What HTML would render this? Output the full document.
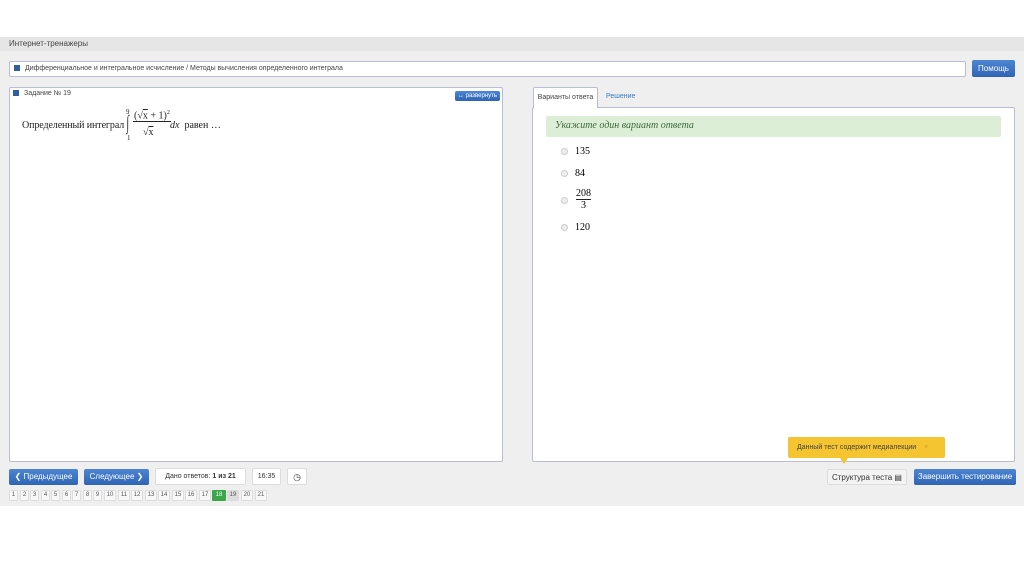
<!DOCTYPE html>
<html><head><meta charset="utf-8"><style>
*{box-sizing:border-box;margin:0;padding:0}
body{width:1024px;height:574px;background:#fff;font-family:"Liberation Sans",sans-serif;position:relative;overflow:hidden}
.a{position:absolute}
.band{left:0;top:37px;width:1024px;height:469px;background:#efefef}
.hdr{left:0;top:37px;width:1024px;height:14px;background:#e6e6e6;font-size:8px;color:#444;padding:2px 9px}
.box{background:#fff;border:1px solid #b9bdd0;border-radius:2px}
.sq{display:inline-block;width:6px;height:6px;background:#2f5f9e;vertical-align:middle;margin-right:5px}
.btn{color:#fff;background:linear-gradient(#4c86d3,#2f64b4);border-radius:2px;font-size:8px;text-align:center}
.wbtn{background:#fff;border:1px solid #ddd;border-radius:2px;font-size:7px;text-align:center;color:#333}
.serif{font-family:"Liberation Serif",serif}
.rad{width:7px;height:7px;border-radius:50%;border:1px solid #ccc;background:#eee}
.pg{top:490px;height:11px;border:1px solid #ddd;background:#f8f8f8;font-size:6px;color:#555;text-align:center;line-height:9px;border-radius:1px}
</style></head><body>
<div class="a band"></div>
<div class="a hdr">Интернет-тренажеры</div>
<div class="a box" style="left:9px;top:61px;width:957px;height:16px;font-size:7px;color:#444;padding:3px 4px"><span class="sq"></span>Дифференциальное и интегральное исчисление / Методы вычисления определенного интеграла</div>
<div class="a btn" style="left:972px;top:60px;width:43px;height:17px;line-height:17px">Помощь</div>
<div class="a box" style="left:9px;top:87px;width:494px;height:375px"></div>
<div class="a" style="left:13px;top:90px;font-size:7px;color:#444"><span class="sq"></span>Задание № 19</div>
<div class="a btn" style="left:455px;top:91px;width:45px;height:10px;font-size:6px;line-height:10px">↔ развернуть</div>
<div class="a serif" style="left:22px;top:120px;font-size:10px;color:#222;letter-spacing:-0.1px">Определенный интеграл</div>
<div class="a serif" style="left:126px;top:108px;font-size:7px;color:#222">9</div>
<div class="a serif" style="left:125px;top:112px;font-size:20px;color:#222;transform:scaleX(.5)">∫</div>
<div class="a serif" style="left:127px;top:134px;font-size:7px;color:#222">1</div>
<div class="a serif" style="left:133px;top:110px;font-size:10px;color:#222;border-bottom:1px solid #222;padding:0 1px">(√<span style="text-decoration:overline">x</span> + 1)<sup style="font-size:6px">2</sup></div>
<div class="a serif" style="left:143px;top:127px;font-size:10px;color:#222">√<span style="text-decoration:overline">x</span></div>
<div class="a serif" style="left:170px;top:120px;font-size:10px;color:#222"><i>dx</i>&nbsp; равен …</div>
<div class="a box" style="left:532px;top:107px;width:483px;height:355px"></div>
<div class="a" style="left:533px;top:87px;width:65px;height:21px;background:#fff;border:1px solid #b9bdd0;border-bottom:none;border-radius:2px 2px 0 0;font-size:7px;color:#444;text-align:center;line-height:20px">Варианты ответа</div>
<div class="a" style="left:606px;top:93px;font-size:7px;color:#3a7cc4">Решение</div>
<div class="a serif" style="left:546px;top:116px;width:455px;height:21px;background:#dcefd6;border-radius:2px;font-size:10px;font-style:italic;color:#3d6a3a;padding:4px 9px">Укажите один вариант ответа</div>
<div class="a rad" style="left:561px;top:148px"></div><div class="a serif" style="left:575px;top:146px;font-size:10px">135</div>
<div class="a rad" style="left:561px;top:170px"></div><div class="a serif" style="left:575px;top:168px;font-size:10px">84</div>
<div class="a rad" style="left:561px;top:197px"></div><div class="a serif" style="left:576px;top:188px;font-size:10px;text-align:center;line-height:11px"><div style="border-bottom:1px solid #222">208</div>3</div>
<div class="a rad" style="left:561px;top:224px"></div><div class="a serif" style="left:575px;top:222px;font-size:10px">120</div>
<div class="a" style="left:788px;top:437px;width:157px;height:21px;background:#f5c431;border-radius:2px;font-size:7px;color:#444;line-height:21px;padding-left:9px">Данный тест содержит медиалекции <span style="color:#d89a20;margin-left:6px">×</span></div>
<div class="a" style="left:840px;top:458px;width:0;height:0;border-left:4px solid transparent;border-right:4px solid transparent;border-top:6px solid #f5c431"></div>
<div class="a btn" style="left:9px;top:469px;width:69px;height:16px;line-height:16px">❮ Предыдущее</div>
<div class="a btn" style="left:84px;top:469px;width:65px;height:16px;line-height:16px">Следующее ❯</div>
<div class="a wbtn" style="left:155px;top:468px;width:91px;height:17px;line-height:16px">Дано ответов: <b>1 из 21</b></div>
<div class="a wbtn" style="left:252px;top:468px;width:29px;height:17px;line-height:16px">16:35</div>
<div class="a wbtn" style="left:287px;top:468px;width:20px;height:17px;line-height:16px;font-size:9px">◷</div>
<div class="a wbtn" style="left:827px;top:469px;width:80px;height:16px;line-height:15px;font-size:8px;background:#f3f3f3">Структура теста ▤</div>
<div class="a btn" style="left:914px;top:469px;width:102px;height:16px;line-height:16px">Завершить тестирование</div>
<div class="a pg" style="left:9px;width:9px">1</div><div class="a pg" style="left:20px;width:9px">2</div><div class="a pg" style="left:30px;width:9px">3</div><div class="a pg" style="left:41px;width:9px">4</div><div class="a pg" style="left:51px;width:9px">5</div><div class="a pg" style="left:62px;width:9px">6</div><div class="a pg" style="left:72px;width:9px">7</div><div class="a pg" style="left:83px;width:9px">8</div><div class="a pg" style="left:93px;width:9px">9</div>
<div class="a pg" style="left:104px;width:12px">10</div><div class="a pg" style="left:118px;width:12px">11</div><div class="a pg" style="left:131px;width:12px">12</div><div class="a pg" style="left:145px;width:12px">13</div><div class="a pg" style="left:158px;width:12px">14</div><div class="a pg" style="left:172px;width:12px">15</div><div class="a pg" style="left:185px;width:12px">16</div><div class="a pg" style="left:199px;width:12px">17</div><div class="a pg" style="left:212px;width:14px;background:#3aa84a;border-color:#3aa84a;color:#fff">18</div><div class="a pg" style="left:227px;width:12px;background:#ddd">19</div><div class="a pg" style="left:241px;width:12px">20</div><div class="a pg" style="left:255px;width:12px">21</div>
</body></html>
